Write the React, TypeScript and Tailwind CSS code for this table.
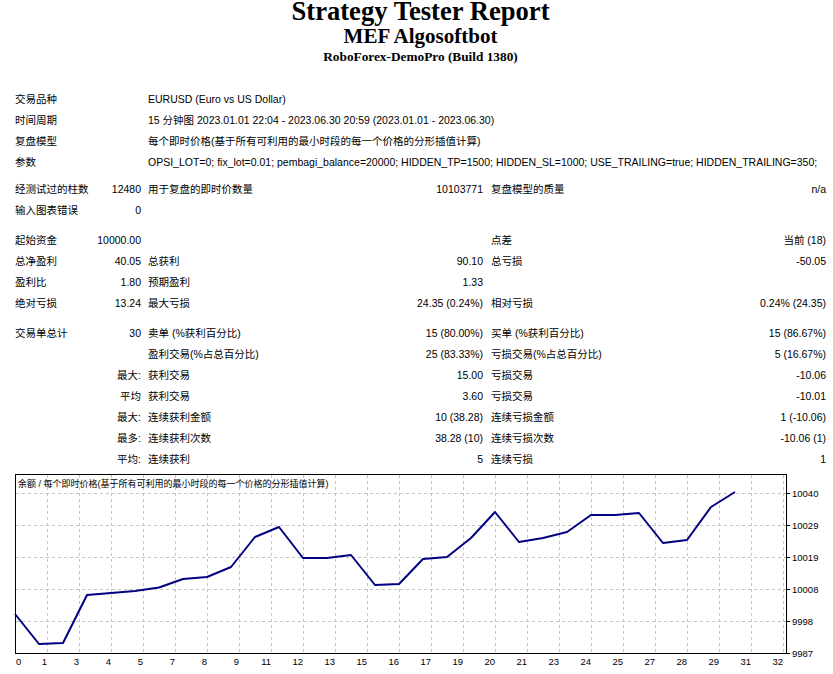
const wideRows = [
  ["交易品种", "EURUSD (Euro vs US Dollar)"],
  ["时间周期", "15 分钟图 2023.01.01 22:04 - 2023.06.30 20:59 (2023.01.01 - 2023.06.30)"],
  ["复盘模型", "每个即时价格(基于所有可利用的最小时段的每一个价格的分形插值计算)"],
  [
    "参数",
    "OPSI_LOT=0; fix_lot=0.01; pembagi_balance=20000; HIDDEN_TP=1500; HIDDEN_SL=1000; USE_TRAILING=true; HIDDEN_TRAILING=350;",
  ],
]

// each group is preceded by a thin spacer row
const groups = [
  {
    gap: "h-[6px]",
    rows: [
      ["经测试过的柱数", "12480", "用于复盘的即时价数量", "10103771", "复盘模型的质量", "n/a"],
      ["输入图表错误", "0", "", "", "", ""],
    ],
  },
  {
    gap: "h-[9px]",
    rows: [
      ["起始资金", "10000.00", "", "", "点差", "当前 (18)"],
      ["总净盈利", "40.05", "总获利", "90.10", "总亏损", "-50.05"],
      ["盈利比", "1.80", "预期盈利", "1.33", "", ""],
      ["绝对亏损", "13.24", "最大亏损", "24.35 (0.24%)", "相对亏损", "0.24% (24.35)"],
    ],
  },
  {
    gap: "h-[9px]",
    rows: [
      ["交易单总计", "30", "卖单 (%获利百分比)", "15 (80.00%)", "买单 (%获利百分比)", "15 (86.67%)"],
      ["", "", "盈利交易(%占总百分比)", "25 (83.33%)", "亏损交易(%占总百分比)", "5 (16.67%)"],
      ["", "最大:", "获利交易", "15.00", "亏损交易", "-10.06"],
      ["", "平均", "获利交易", "3.60", "亏损交易", "-10.01"],
      ["", "最大:", "连续获利金额", "10 (38.28)", "连续亏损金额", "1 (-10.06)"],
      ["", "最多:", "连续获利次数", "38.28 (10)", "连续亏损次数", "-10.06 (1)"],
      ["", "平均:", "连续获利", "5", "连续亏损", "1"],
    ],
  },
]

const cols = "grid grid-cols-[70px_56px_202px_140px_200px_143px] h-[21px] items-center whitespace-nowrap"

// balance after each trade, in page pixels
const curveY = [
  614, 644, 643, 595, 593, 591, 587.5, 579, 577, 567, 537, 527, 558, 558, 555, 585, 584, 559, 557, 538, 512, 542, 538,
  532, 515, 515, 513, 543, 540, 507, 492,
]
const xLabels = [0, 1, 3, 4, 5, 7, 8, 9, 11, 12, 13, 15, 16, 17, 19, 20, 21, 23, 24, 25, 27, 28, 29, 31, 32]
const yLabels = ["10040", "10029", "10019", "10008", "9998", "9987"]

function StatRow({ cells }: { cells: string[] }) {
  return (
    <div className={cols}>
      <div>{cells[0]}</div>
      <div className="text-right">{cells[1]}</div>
      <div className="pl-[7px]">{cells[2]}</div>
      <div className="text-right">{cells[3]}</div>
      <div className="pl-[8px]">{cells[4]}</div>
      <div className="text-right">{cells[5]}</div>
    </div>
  )
}

function BalanceChart() {
  const points = curveY.map((y, i) => `${15 + 24 * i},${y}`).join(" ")
  return (
    <svg
      width={833}
      height={204}
      viewBox="0 470 833 204"
      className="block"
      fontFamily="'Liberation Sans', 'Noto Sans CJK SC', sans-serif"
    >
      {xLabels.slice(1).map((_, k) => (
        <line
          key={"v" + k}
          x1={15.5 + 32 * (k + 1)}
          x2={15.5 + 32 * (k + 1)}
          y1={475}
          y2={653}
          stroke="#c4c4c4"
          strokeDasharray="3 3"
        />
      ))}
      {[493, 525, 557, 589, 621].map((y) => (
        <line key={"h" + y} x1={16} x2={786} y1={y + 0.5} y2={y + 0.5} stroke="#c4c4c4" strokeDasharray="3 3" />
      ))}
      <rect x={15.5} y={474.5} width={771} height={179} fill="none" stroke="#000" />
      {[493, 525, 557, 589, 621, 653].map((y) => (
        <line key={"t" + y} x1={786} x2={790} y1={y + 0.5} y2={y + 0.5} stroke="#000" />
      ))}
      <polyline points={points} fill="none" stroke="#000080" strokeWidth={2} strokeLinejoin="round" />
      <text x={18} y={487} fontSize={9} fill="#000">
        余额 / 每个即时价格(基于所有可利用的最小时段的每一个价格的分形插值计算)
      </text>
      {yLabels.map((t, i) => (
        <text key={t} x={792} y={493 + 32 * i + 3.5} fontSize={9.5} fill="#000">
          {t}
        </text>
      ))}
      {xLabels.map((t, k) => (
        <text
          key={"x" + t}
          x={k === 0 ? 16 : 15 + 32 * k}
          y={665}
          fontSize={9.5}
          textAnchor={k === 0 ? "start" : "end"}
          fill="#000"
        >
          {t}
        </text>
      ))}
    </svg>
  )
}

export default function App() {
  return (
    <div className="w-[833px] h-[674px] overflow-hidden bg-white text-black">
      <div className="pl-[8px] text-center font-['Liberation_Serif',serif] font-bold">
        <div className="text-[26.6px] leading-[22px]">Strategy Tester Report</div>
        <div className="mt-[3px] text-[21px] leading-[22px]">MEF Algosoftbot</div>
        <div className="mt-[2px] text-[13.3px] leading-[16px]">RoboForex-DemoPro (Build 1380)</div>
      </div>

      <div className="mt-[24px] pl-[15px] text-[10.5px] font-['Liberation_Sans','Noto_Sans_CJK_SC',sans-serif]">
        {wideRows.map(([label, value]) => (
          <div key={label} className="flex h-[21px] items-center whitespace-nowrap">
            <div className="w-[126px] shrink-0">{label}</div>
            <div className="pl-[7px]">{value}</div>
          </div>
        ))}

        {groups.map((g, gi) => (
          <div key={gi}>
            <div className={g.gap} />
            {g.rows.map((r, ri) => (
              <StatRow key={ri} cells={r} />
            ))}
          </div>
        ))}
      </div>

      <BalanceChart />
    </div>
  )
}
